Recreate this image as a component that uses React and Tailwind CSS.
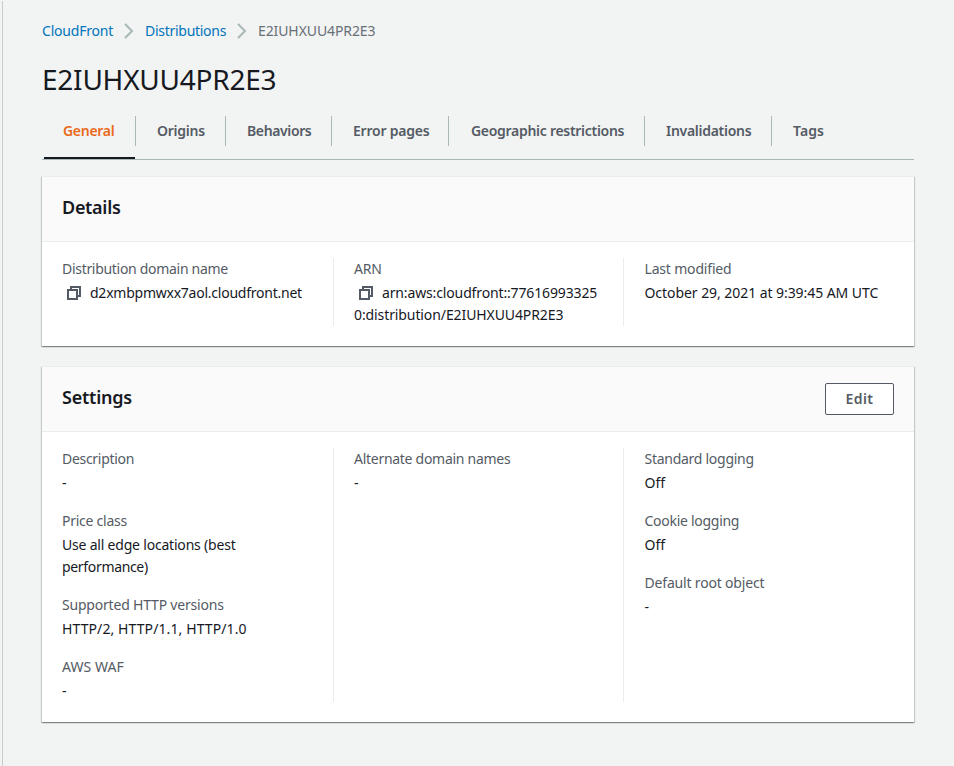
function CopyIcon() {
  return (
    <svg className="mr-2 ml-1 inline-block size-4 align-[-3px] text-[#545b64]" viewBox="0 0 16 16" fill="none" stroke="currentColor" strokeWidth="2">
      <path d="M2 5h9v9H2z" />
      <path d="M5 5V2h9v9h-3" />
    </svg>
  );
}

function Chevron() {
  return (
    <svg className="h-4 w-[10px] text-[#aab7b8]" viewBox="0 0 10 16" fill="none" stroke="currentColor" strokeWidth="2">
      <path d="M1 1l7 7-7 7" />
    </svg>
  );
}

const tabs = [
  { label: "Origins", size: "w-[90px] pl-[21px] tracking-[-0.25px]" },
  { label: "Behaviors", size: "w-[106px] pl-[21px] tracking-[-0.38px]" },
  { label: "Error pages", size: "w-[117px] pl-[21px] tracking-[-0.23px]" },
  { label: "Geographic restrictions", size: "w-[196px] pl-[22px] tracking-[-0.29px]" },
  { label: "Invalidations", size: "w-[127px] pl-[21px] tracking-[-0.28px]" },
];

function Card({ title, titleClass, action, children }) {
  return (
    <section className="border-t border-[#eaeded] bg-white shadow-[0_1px_1px_0_rgba(0,28,36,0.3),1px_1px_1px_0_rgba(0,28,36,0.15),-1px_1px_1px_0_rgba(0,28,36,0.15)]">
      <header className="flex h-[65px] items-center justify-between border-b border-[#eaeded] bg-[#fafafa] px-5">
        <h2 className={`-mt-[5px] text-lg leading-[22px] font-semibold ${titleClass}`}>{title}</h2>
        {action}
      </header>
      <div className="grid grid-cols-[292px_290px_1fr] pt-4 pb-5">{children}</div>
    </section>
  );
}

function Column({ last, children }) {
  return (
    <div className={`flex flex-col gap-4 ${last ? "pl-[20.5px]" : "border-r border-[#eaeded] pl-5"}`}>{children}</div>
  );
}

function Field({ label, labelClass = "", valueClass = "", children }) {
  return (
    <div className="flex flex-col gap-0.5 whitespace-nowrap">
      <div className={`text-[#545b64] ${labelClass}`}>{label}</div>
      <div className={valueClass}>{children}</div>
    </div>
  );
}

export default function App() {
  return (
    <div className="flex h-[766px] w-[954px] bg-[#f2f3f3] pl-[2px] font-['Noto_Sans',sans-serif] text-sm leading-[22px] text-[#16191f]">
      <main className="mt-px w-[912px] border-l border-[#c4cccc] pl-[39px]">
        <nav className="mt-[19px] flex h-[22px] items-center whitespace-nowrap">
          <a className="w-[82px] tracking-[-0.2px] text-[#0073bb]">CloudFront</a>
          <Chevron />
          <a className="ml-[11px] w-[92px] tracking-[-0.28px] text-[#0073bb]">Distributions</a>
          <Chevron />
          <span className="ml-[11px] tracking-[-0.1px] text-[#687078]">E2IUHXUU4PR2E3</span>
        </nav>
        <h1 className="mt-[19px] h-9 text-[28px] leading-9 tracking-[-0.23px]">E2IUHXUU4PR2E3</h1>
        <div className="mt-[7px] flex h-[56px] border-b border-[#aab7b8] pt-3 font-semibold whitespace-nowrap text-[#545b64]">
          <div className="w-[94px]">
            <div className="h-[30px] border-r border-[#aab7b8] pl-[21px] leading-[30px] tracking-[-0.3px] text-[#eb6a1a]">General</div>
            <div className="mt-[11px] mr-px ml-[2px] h-[2px] bg-[#16191f]" />
          </div>
          {tabs.map((t) => (
            <div key={t.label} className={`h-[30px] border-r border-[#aab7b8] leading-[30px] ${t.size}`}>{t.label}</div>
          ))}
          <div className="pl-[21px] leading-[30px] tracking-[0.1px]">Tags</div>
        </div>

        <div className="mt-4 flex flex-col gap-5">
          <Card title="Details" titleClass="tracking-[-0.3px]">
            <Column>
              <Field label="Distribution domain name" labelClass="tracking-[-0.3px]" valueClass="tracking-[-0.24px]">
                <CopyIcon />d2xmbpmwxx7aol.cloudfront.net
              </Field>
            </Column>
            <Column>
              <Field label="ARN" labelClass="tracking-[-0.2px]">
                <div className="tracking-[-0.14px]"><CopyIcon />arn:aws:cloudfront::77616993325</div>
                <div className="tracking-[-0.1px]">0:distribution/E2IUHXUU4PR2E3</div>
              </Field>
            </Column>
            <Column last>
              <Field label="Last modified" labelClass="tracking-[-0.18px]" valueClass="tracking-[-0.06px]">October 29, 2021 at 9:39:45 AM UTC</Field>
            </Column>
          </Card>

          <Card
            title="Settings"
            titleClass="tracking-[-0.22px]"
            action={
              <button className="h-8 w-[69px] rounded-[2px] border border-[#545b64] bg-white font-semibold tracking-[0.4px] text-[#545b64]">Edit</button>
            }
          >
            <Column>
              <Field label="Description" labelClass="tracking-[-0.3px]">-</Field>
              <Field label="Price class" labelClass="tracking-[-0.25px]">
                <div className="tracking-[-0.2px]">Use all edge locations (best</div>
                <div className="tracking-[-0.33px]">performance)</div>
              </Field>
              <Field label="Supported HTTP versions" labelClass="tracking-[-0.2px]" valueClass="tracking-[0.1px]">HTTP/2, HTTP/1.1, HTTP/1.0</Field>
              <Field label="AWS WAF" labelClass="tracking-[0.05px]">-</Field>
            </Column>
            <Column>
              <Field label="Alternate domain names" labelClass="tracking-[-0.28px]">-</Field>
            </Column>
            <Column last>
              <Field label="Standard logging" labelClass="tracking-[-0.27px]">Off</Field>
              <Field label="Cookie logging" labelClass="tracking-[-0.28px]">Off</Field>
              <Field label="Default root object" labelClass="tracking-[-0.18px]">-</Field>
            </Column>
          </Card>
        </div>
      </main>
    </div>
  );
}
